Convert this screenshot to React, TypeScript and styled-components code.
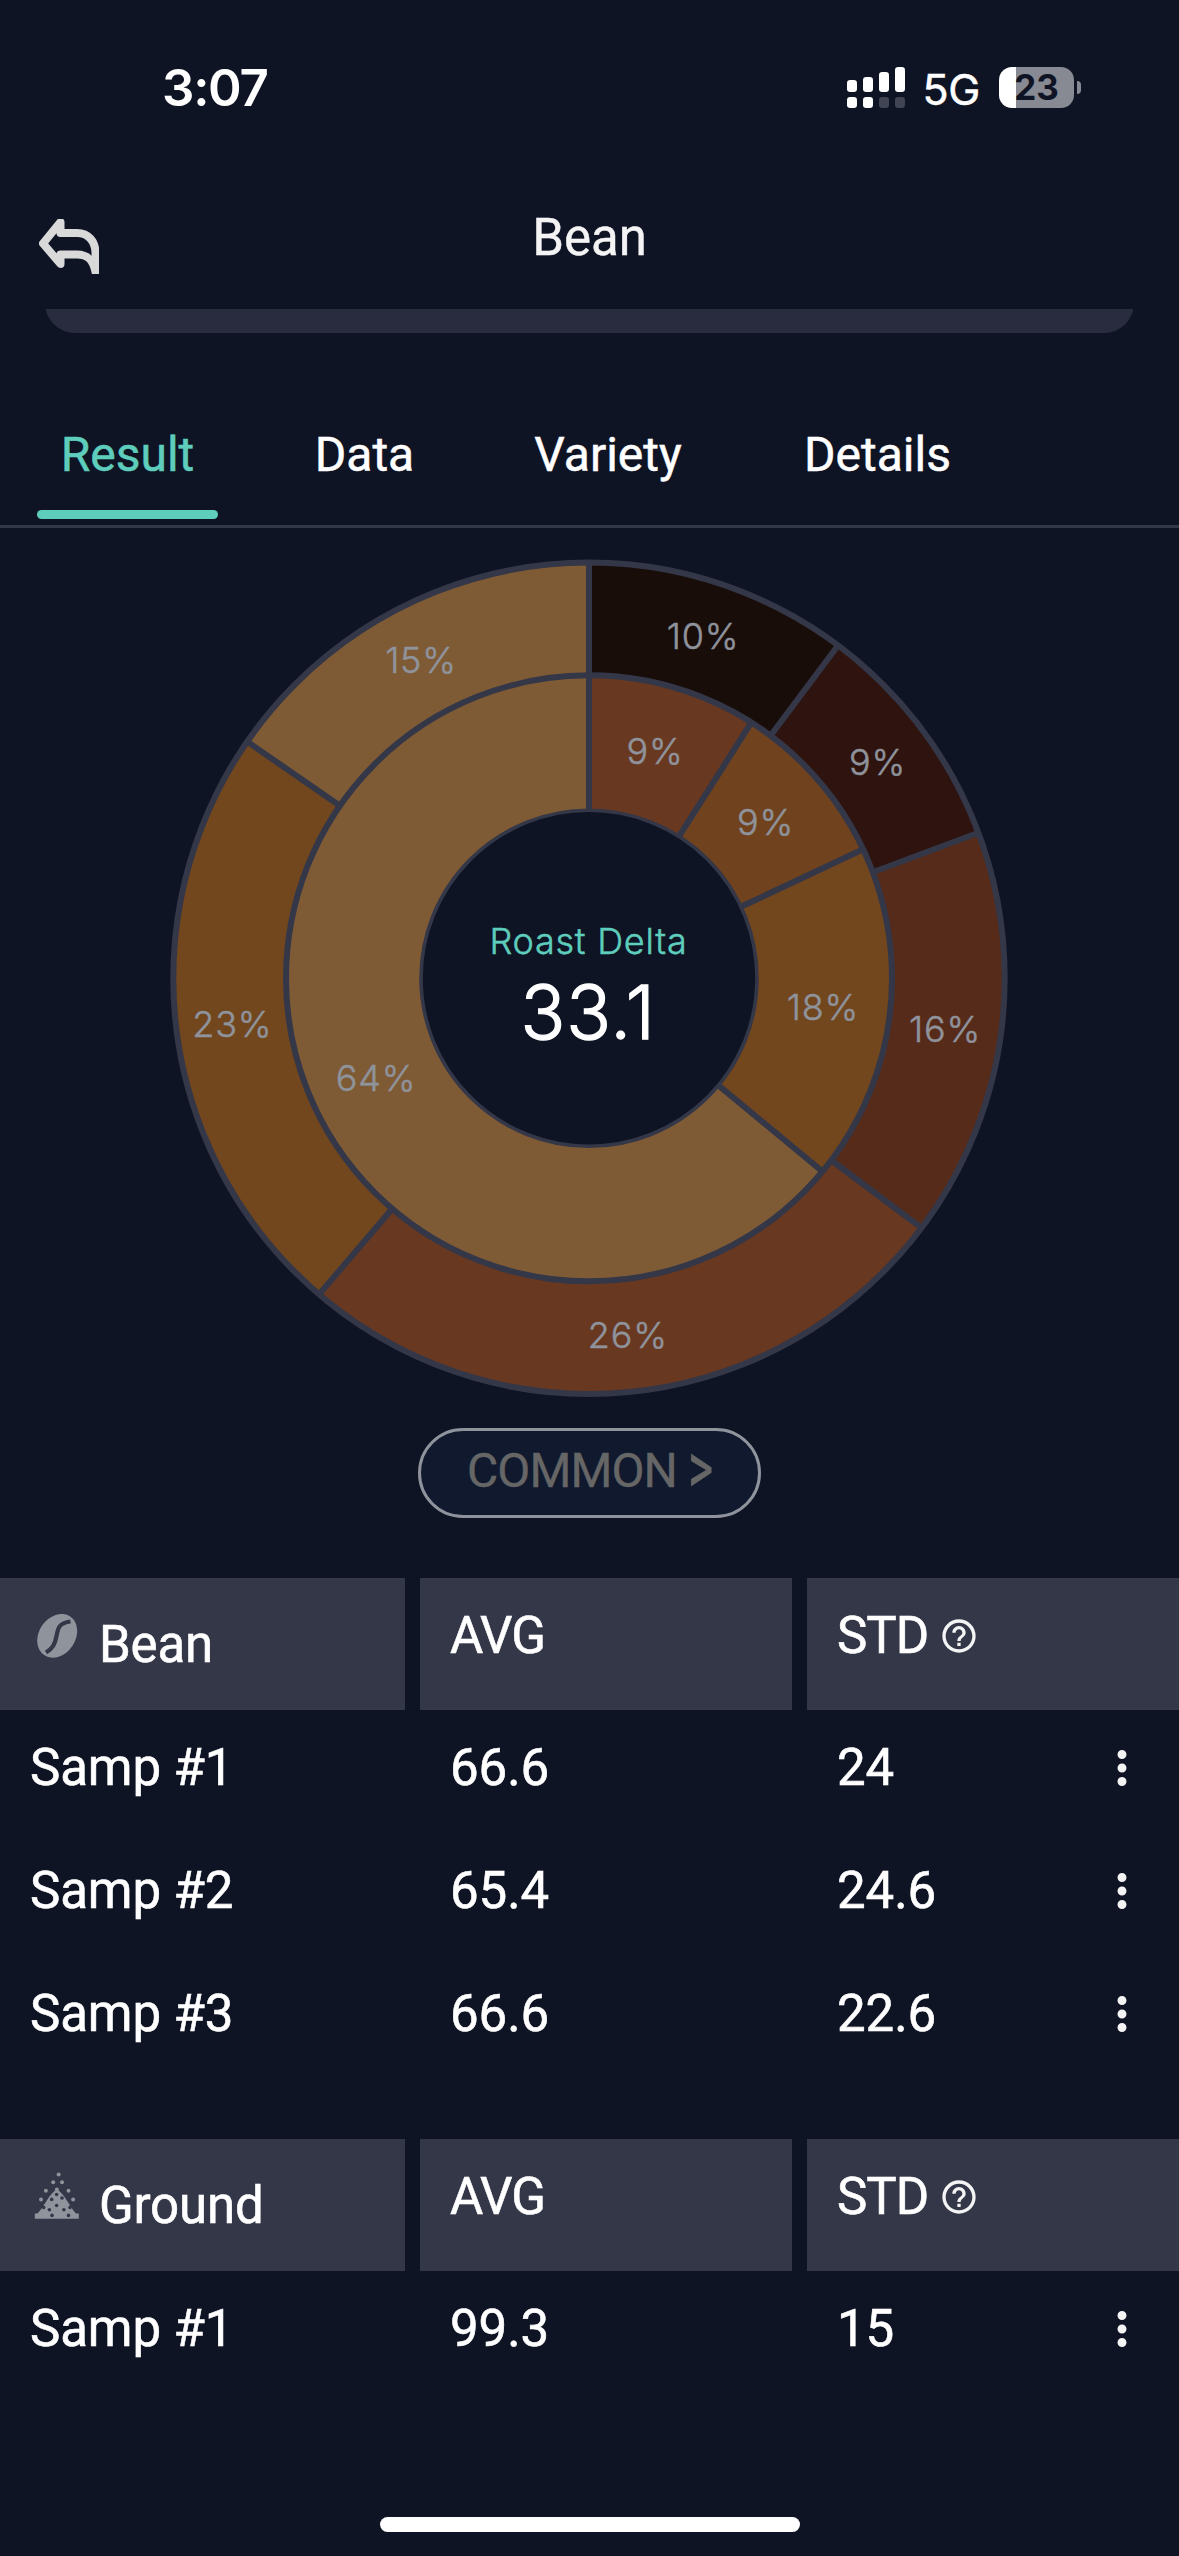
import React from "react";
import styled, { createGlobalStyle } from "styled-components";
import { MdHelpOutline, MdMoreVert } from "react-icons/md";

const colors = {
  bg: "#0f1425",
  panel: "#343748",
  card: "#292c3f",
  accent: "#5ecdbc",
  muted: "#8f939c",
};

const GlobalStyle = createGlobalStyle`
  *, *::before, *::after { box-sizing: border-box; }
  html, body { margin: 0; background: ${colors.bg}; }
  body { width: 1179px; height: 2556px; overflow: hidden; }
`;

const Screen = styled.div`
  display: flex;
  flex-direction: column;
  width: 1179px;
  height: 2556px;
  background: ${colors.bg};
  color: #fff;
  font-family: Roboto, "Liberation Sans", sans-serif;
`;

const StatusBar = styled.div`
  display: flex;
  align-items: center;
  justify-content: space-between;
  height: 160px;
  padding: 15px 98px 0 162px;
  font-family: Inter, "Liberation Sans", sans-serif;
`;

const Clock = styled.span`
  font-size: 51px;
  font-weight: 600;
  line-height: 60px;
  letter-spacing: -1.3px;
`;

const StatusIcons = styled.div`
  display: flex;
  align-items: center;
`;

const Network = styled.span`
  margin: 3px 19px 0 18px;
  font-size: 43px;
  font-weight: 400;
  line-height: 50px;
  letter-spacing: -0.4px;
  -webkit-text-stroke: 0.5px;
`;

const Battery = styled.div`
  display: flex;
  align-items: center;
  justify-content: center;
  width: 75px;
  height: 41px;
  border-radius: 13px;
  background: linear-gradient(to right, #fff 17px, #888a93 17px);
  color: ${colors.bg};
  font-size: 35px;
  font-weight: 700;
  line-height: 41px;
`;

const BatteryCap = styled.div`
  width: 4px;
  height: 13px;
  margin-left: 3px;
  border-radius: 0 4px 4px 0;
  background: #888a93;
`;

const NavBar = styled.header`
  display: grid;
  grid-template-columns: 1fr auto 1fr;
  align-items: start;
  height: 149px;
  padding: 48px 39px 0;
`;

const BackButton = styled.button`
  display: block;
  justify-self: start;
  margin: 11px 0 0;
  padding: 0;
  border: 0;
  background: none;
`;

const Title = styled.h1`
  margin: 0;
  color: #f4f4f4;
  font-size: 51px;
  font-weight: 400;
  line-height: 60px;
  -webkit-text-stroke: 0.4px;
`;

const ScrollClip = styled.div`
  height: 24px;
  padding: 0 45px;
  overflow: hidden;
`;

const ScrolledCard = styled.div`
  height: 80px;
  margin-top: -56px;
  border-radius: 30px;
  background: ${colors.card};
`;

const Tabs = styled.nav`
  display: flex;
  gap: 71px;
  height: 195px;
  padding: 92px 0 6px 37px;
  border-bottom: 3px solid ${colors.panel};
  -webkit-text-stroke: 0.5px;
`;

const Tab = styled.div<{ $width: number; $active?: boolean }>`
  display: flex;
  flex-direction: column;
  justify-content: space-between;
  align-items: center;
  width: ${(p) => p.$width}px;
  color: ${(p) => (p.$active ? colors.accent : "#fff")};
  font-size: 48px;
  line-height: 60px;

  &::after {
    content: "";
    width: 100%;
    height: 9px;
    border-radius: 5px;
    background: ${(p) => (p.$active ? colors.accent : "transparent")};
  }
`;

const Chart = styled.svg`
  display: block;
  flex: none;
  font-family: Inter, "Liberation Sans", sans-serif;
`;

const FilterButton = styled.button`
  display: flex;
  align-items: center;
  justify-content: center;
  gap: 11px;
  align-self: center;
  flex: none;
  width: 343px;
  height: 90px;
  margin: 0 0 60px;
  padding: 0 0 4px;
  border: 3px solid ${colors.muted};
  border-radius: 45px;
  background: #10192d;
  color: #666;
  font: 400 48px / 80px Roboto, "Liberation Sans", sans-serif;
  letter-spacing: -0.9px;
  -webkit-text-stroke: 0.4px;
`;

const Arrow = styled.span`
  display: inline-block;
  transform: scaleY(1.5);
  transform-origin: 50% 54%;
`;

const Table = styled.section`
  display: grid;
  grid-template-columns: 405px 372px 372px;
  column-gap: 15px;
  margin-bottom: 60px;
  font-size: 51px;
  line-height: 60px;
  -webkit-text-stroke: 0.6px;
`;

const HeadCell = styled.div`
  display: flex;
  align-items: flex-start;
  gap: 11px;
  height: 132px;
  padding: 28px 30px 0;
  background: ${colors.panel};
  letter-spacing: -1px;
`;

const HelpIcon = styled(MdHelpOutline)`
  margin-top: 10px;
`;

const GroupName = styled.span`
  margin: 9px 0 0 8px;
  letter-spacing: -0.2px;
`;

const GroupIcon = styled.svg<{ $top: number }>`
  display: block;
  flex: none;
  margin: ${(p) => p.$top}px 0 0 4px;
`;

const Cell = styled.div`
  display: flex;
  align-items: center;
  justify-content: space-between;
  height: 123px;
  padding: 0 30px 8px;
  letter-spacing: -0.1px;
`;

const HomeIndicator = styled.div`
  align-self: center;
  width: 420px;
  height: 15px;
  margin-top: auto;
  margin-bottom: 24px;
  border-radius: 8px;
  background: #fff;
`;

const ChartLabel = styled.text`
  fill: ${colors.muted};
  stroke: ${colors.muted};
  stroke-width: 0.5px;
  font-size: 36px;
  font-weight: 300;
  letter-spacing: 0.8px;
  text-anchor: middle;
`;

const ChartCaption = styled(ChartLabel)`
  fill: ${colors.accent};
  stroke: ${colors.accent};
  letter-spacing: 0.75px;
`;

const ChartValue = styled.text`
  fill: #fff;
  stroke: #fff;
  stroke-width: 1.3px;
  font-size: 74px;
  font-weight: 300;
  letter-spacing: 0.9px;
`;

const CX = 589;
const CY = 978.3;
const R_OUTER = 415.7;
const R_MID = 303;
const R_INNER = 168;

type Slice = { from: number; to: number; color: string; label: string; x: number; y: number };

const outerSlices: Slice[] = [
  { from: 0, to: 36.8, color: "#190d0a", label: "10%", x: 702, y: 636 },
  { from: 36.8, to: 69.5, color: "#2e130e", label: "9%", x: 876.5, y: 762 },
  { from: 69.5, to: 126.9, color: "#572b19", label: "16%", x: 944, y: 1029 },
  { from: 126.9, to: 220.5, color: "#693820", label: "26%", x: 626.8, y: 1335 },
  { from: 220.5, to: 304.7, color: "#72471e", label: "23%", x: 231.3, y: 1024 },
  { from: 304.7, to: 360, color: "#7f5b35", label: "15%", x: 420, y: 659.5 },
];

const innerSlices: Slice[] = [
  { from: 0, to: 32.4, color: "#693820", label: "9%", x: 654, y: 751 },
  { from: 32.4, to: 64.8, color: "#70431e", label: "9%", x: 764.5, y: 822 },
  { from: 64.8, to: 129.6, color: "#72471e", label: "18%", x: 822, y: 1007 },
  { from: 129.6, to: 360, color: "#7f5b35", label: "64%", x: 375, y: 1078 },
];

const at = (r: number, deg: number) => {
  const a = (deg * Math.PI) / 180;
  return `${(CX + r * Math.sin(a)).toFixed(2)} ${(CY - r * Math.cos(a)).toFixed(2)}`;
};

const slicePath = (s: Slice, r0: number, r1: number) => {
  const large = s.to - s.from > 180 ? 1 : 0;
  return `M${at(r1, s.from)} A${r1} ${r1} 0 ${large} 1 ${at(r1, s.to)} L${at(r0, s.to)} A${r0} ${r0} 0 ${large} 0 ${at(r0, s.from)} Z`;
};

function Ring({ slices, r0, r1 }: { slices: Slice[]; r0: number; r1: number }) {
  return (
    <>
      {slices.map((s) => (
        <path key={s.from} d={slicePath(s, r0, r1)} fill={s.color} />
      ))}
      {slices.map((s) => (
        <path key={s.from} d={`M${at(r0, s.from)} L${at(r1, s.from)}`} stroke={colors.panel} strokeWidth="6" />
      ))}
      {slices.map((s) => (
        <ChartLabel key={s.from} x={s.x + 1} y={s.y + 13}>
          {s.label}
        </ChartLabel>
      ))}
    </>
  );
}

function RoastChart() {
  return (
    <Chart width="1179" height="900" viewBox="0 528 1179 900">
      <Ring slices={outerSlices} r0={R_MID} r1={R_OUTER} />
      <Ring slices={innerSlices} r0={R_INNER} r1={R_MID} />
      <g fill="none" stroke={colors.panel} strokeWidth="6">
        <circle cx={CX} cy={CY} r={R_OUTER} />
        <circle cx={CX} cy={CY} r={R_MID} />
        <circle cx={CX} cy={CY} r={R_INNER} strokeWidth="3.6" />
      </g>
      <ChartCaption x={CX - 0.5} y="954">
        Roast Delta
      </ChartCaption>
      <ChartValue x="520.5" y="1038.5">
        33.1
      </ChartValue>
    </Chart>
  );
}

const bars = [
  { x: 0, top: 13, low: true },
  { x: 16, top: 10, low: true },
  { x: 32, top: 5, low: false },
  { x: 48, top: 0, low: false },
];

function Signal() {
  return (
    <svg width="58" height="41" viewBox="0 0 58 41">
      {bars.map((b) => (
        <g key={b.x} fill="#fff">
          <rect x={b.x} y={b.top} width="10" height={25 - b.top} rx="3.2" />
          <rect x={b.x} y="30" width="10" height="11" rx="3.2" fill={b.low ? "#fff" : "#414453"} />
        </g>
      ))}
    </svg>
  );
}

function BackArrow() {
  return (
    <svg width="60" height="55" viewBox="0 0 60 55" display="block">
      <path
        d="M4 24.5 L21.5 3 V14 H38 C50 14 56 23 56.5 33 V53 C54 41 49 35.5 38 35.5 H21.5 V45 Z"
        fill="none"
        stroke="#d9d9d9"
        strokeWidth="8"
        strokeLinejoin="round"
      />
    </svg>
  );
}

function BeanIcon() {
  return (
    <GroupIcon $top={7} width="46" height="46" viewBox="-2 -1 46 46">
      <ellipse cx="21.2" cy="21.8" rx="18.3" ry="23.3" transform="rotate(34 21.2 21.8)" fill={colors.muted} />
      <path d="M34.5 7.5 C23 9 22 14 20.5 22 C19 30 17 34 10 38.5" fill="none" stroke={colors.panel} strokeWidth="4.2" />
    </GroupIcon>
  );
}

const looseGrains = [[24.6, 2.4], [19.2, 10.3], [28, 10.3], [11.9, 18.7], [34.5, 18.7], [7, 27.4], [39.1, 27.4], [22.9, 17.6]];
const pileGrains = [[22.6, 22.5], [28, 26], [17.7, 27.4], [22.6, 33.5], [9.6, 35.4], [36, 35.4], [15.4, 37.7], [29.9, 37.7], [18, 43.4], [34.5, 43.4]];

function GroundIcon() {
  return (
    <GroupIcon $top={5} width="46" height="48" viewBox="0 0 46 48">
      <g fill={colors.muted}>
        <path d="M0.8 46.8 V41.5 H3.4 C9.5 36 12 27 20.5 19 Q22.9 17 25.3 19 C33.5 27 36.5 36 42 41.5 H44.8 V46.8 Z" />
        {looseGrains.map(([x, y]) => (
          <circle key={`${x}-${y}`} cx={x} cy={y} r="2" />
        ))}
        {pileGrains.map(([x, y]) => (
          <circle key={`${x}-${y}`} cx={x} cy={y} r="1.8" fill={colors.panel} />
        ))}
      </g>
    </GroupIcon>
  );
}

type Sample = { name: string; avg: string; std: string };

function SampleTable({ icon, name, samples }: { icon: React.ReactNode; name: string; samples: Sample[] }) {
  return (
    <Table>
      <HeadCell>
        {icon}
        <GroupName>{name}</GroupName>
      </HeadCell>
      <HeadCell>AVG</HeadCell>
      <HeadCell>
        STD
        <HelpIcon size={40} color="#f4f4f4" />
      </HeadCell>
      {samples.map((s) => (
        <React.Fragment key={s.name}>
          <Cell>{s.name}</Cell>
          <Cell>{s.avg}</Cell>
          <Cell>
            {s.std}
            <MdMoreVert size={54} color="#f4f4f4" />
          </Cell>
        </React.Fragment>
      ))}
    </Table>
  );
}

const beanSamples: Sample[] = [
  { name: "Samp #1", avg: "66.6", std: "24" },
  { name: "Samp #2", avg: "65.4", std: "24.6" },
  { name: "Samp #3", avg: "66.6", std: "22.6" },
];

const groundSamples: Sample[] = [{ name: "Samp #1", avg: "99.3", std: "15" }];

export default function App() {
  return (
    <Screen>
      <GlobalStyle />
      <StatusBar>
        <Clock>3:07</Clock>
        <StatusIcons>
          <Signal />
          <Network>5G</Network>
          <Battery>23</Battery>
          <BatteryCap />
        </StatusIcons>
      </StatusBar>
      <NavBar>
        <BackButton aria-label="Back">
          <BackArrow />
        </BackButton>
        <Title>Bean</Title>
      </NavBar>
      <ScrollClip>
        <ScrolledCard />
      </ScrollClip>
      <Tabs>
        <Tab $width={181} $active>Result</Tab>
        <Tab $width={151}>Data</Tab>
        <Tab $width={194}>Variety</Tab>
        <Tab $width={203}>Details</Tab>
      </Tabs>
      <RoastChart />
      <FilterButton>
        COMMON
        <Arrow>&gt;</Arrow>
      </FilterButton>
      <SampleTable icon={<BeanIcon />} name="Bean" samples={beanSamples} />
      <SampleTable icon={<GroundIcon />} name="Ground" samples={groundSamples} />
      <HomeIndicator />
    </Screen>
  );
}
